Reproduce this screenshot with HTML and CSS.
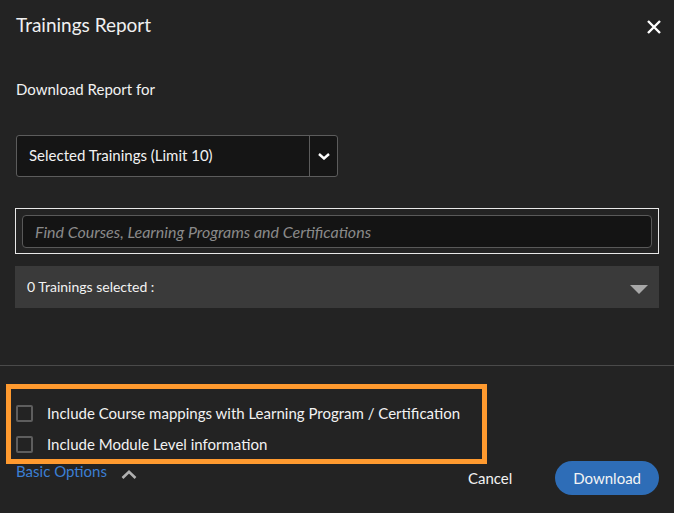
FILE: index.html
```html
<!DOCTYPE html>
<html lang="en">
<head>
<meta charset="utf-8">
<title>Trainings Report</title>
<link rel="stylesheet" href="styles.css">
</head>
<body>
<div class="dialog">
  <header class="head">
    <h1 class="title">Trainings Report</h1>
    <button class="close" aria-label="Close">
      <svg width="14" height="14" viewBox="0 0 14 14"><path d="M1 1L13 13M13 1L1 13" stroke="#fff" stroke-width="2.4" fill="none"/></svg>
    </button>
  </header>
  <p class="label">Download Report for</p>
  <div class="select">
    <span class="select-text">Selected Trainings (Limit 10)</span>
    <span class="select-btn">
      <svg width="12" height="7" viewBox="0 0 12 7"><path d="M1 1L6 5.5L11 1" stroke="#fff" stroke-width="2.4" fill="none"/></svg>
    </span>
  </div>
  <div class="search">
    <input class="search-input" type="text" placeholder="Find Courses, Learning Programs and Certifications">
  </div>
  <div class="bar">
    <span class="bar-text">0 Trainings selected :</span>
    <span class="tri"></span>
  </div>
</div>
<div class="divider"></div>
<div class="options">
  <label class="opt"><span class="box"></span><span>Include Course mappings with Learning Program / Certification</span></label>
  <label class="opt"><span class="box"></span><span>Include Module Level information</span></label>
</div>
<div class="footer">
  <div class="left">
    <span class="basic">Basic Options</span>
    <svg class="up" width="16" height="9" viewBox="0 0 16 9"><path d="M1.5 8L8 1.8L14.5 8" stroke="#b0b0b0" stroke-width="2.6" fill="none"/></svg>
  </div>
  <div class="right">
    <span class="cancel">Cancel</span>
    <span class="download">Download</span>
  </div>
</div>
<div class="highlight"></div>
</body>
</html>
```
FILE: styles.css
```css
html, body {
  margin: 0;
  padding: 0;
}
body {
  background: #232323;
  color: #f2f2f2;
  font-family: Lato, "Liberation Sans", sans-serif;
  font-size: 15px;
  line-height: 20px;
  width: 674px;
  height: 513px;
  overflow: hidden;
  position: relative;
}
.dialog {
  padding: 0 15px;
}
.head {
  display: flex;
  justify-content: space-between;
  align-items: flex-start;
  padding: 13px 0 0 1px;
  margin-right: -2px;
}
.title {
  margin: 0;
  font-size: 19px;
  font-weight: 400;
  line-height: 24px;
  color: #f0f0f0;
}
.close {
  margin: 7px 0 0;
  padding: 0;
  border: 0;
  background: none;
  width: 14px;
  height: 14px;
  display: block;
}
.close svg {
  display: block;
}
.label {
  margin: 42px 0 0 1px;
}
.select {
  margin: 36px 0 0 1px;
  width: 322px;
  height: 42px;
  box-sizing: border-box;
  border: 1px solid #5c5c5c;
  border-radius: 3px;
  background: #151515;
  display: flex;
}
.select-text {
  flex: 1;
  padding-left: 12px;
  line-height: 39px;
}
.select-btn {
  width: 27px;
  border-left: 1px solid #5c5c5c;
  display: flex;
  align-items: center;
  justify-content: center;
}
.select-btn svg {
  display: block;
}
.search {
  margin-top: 31px;
  border: 1px solid #e8e8e8;
  padding: 6px 6px 5px;
}
.search-input {
  display: block;
  width: 100%;
  height: 33px;
  box-sizing: border-box;
  background: #141414;
  border: 1px solid #595959;
  border-radius: 4px;
  padding: 0 12px;
  margin: 0;
  font-family: Lato, "Liberation Sans", sans-serif;
  font-size: 16px;
  font-style: italic;
  color: #ddd;
  outline: none;
}
.search-input::placeholder {
  color: #8a8a8a;
  opacity: 1;
}
.bar {
  margin-top: 12px;
  height: 42px;
  background: #3a3a3a;
  display: flex;
  align-items: center;
  justify-content: space-between;
  padding: 0 11px 0 12px;
}
.bar-text {
  font-size: 14px;
}
.tri {
  width: 0;
  height: 0;
  border-left: 9px solid transparent;
  border-right: 9px solid transparent;
  border-top: 9px solid #a8a8a8;
  margin-top: 4px;
}
.divider {
  margin-top: 57px;
  height: 1px;
  background: #4a4a4a;
}
.options {
  margin-top: 31px;
  padding-left: 16px;
}
.opt {
  display: flex;
  align-items: center;
  height: 32px;
}
.opt + .opt {
  margin-top: -1px;
}
.box {
  width: 17px;
  height: 17px;
  box-sizing: border-box;
  border: 2px solid #5e5e5e;
  border-radius: 2px;
  margin-right: 14px;
}
.footer {
  display: flex;
  justify-content: space-between;
  align-items: flex-start;
  padding: 1px 15px 0 16px;
}
.left {
  display: flex;
  align-items: flex-start;
}
.basic {
  color: #3b7fd4;
}
.up {
  display: block;
  margin: 9px 0 0 14px;
}
.right {
  display: flex;
  align-items: center;
}
.cancel {
  margin: 0 43px 0 1px;
}
.download {
  height: 34px;
  line-height: 34px;
  padding: 0 18px;
  border-radius: 17px;
  background: #2e6db7;
  color: #f4f4f4;
}
.highlight {
  position: absolute;
  left: 6px;
  top: 384px;
  width: 481px;
  height: 80px;
  box-sizing: border-box;
  border: 5px solid #ff9a2f;
}
```
